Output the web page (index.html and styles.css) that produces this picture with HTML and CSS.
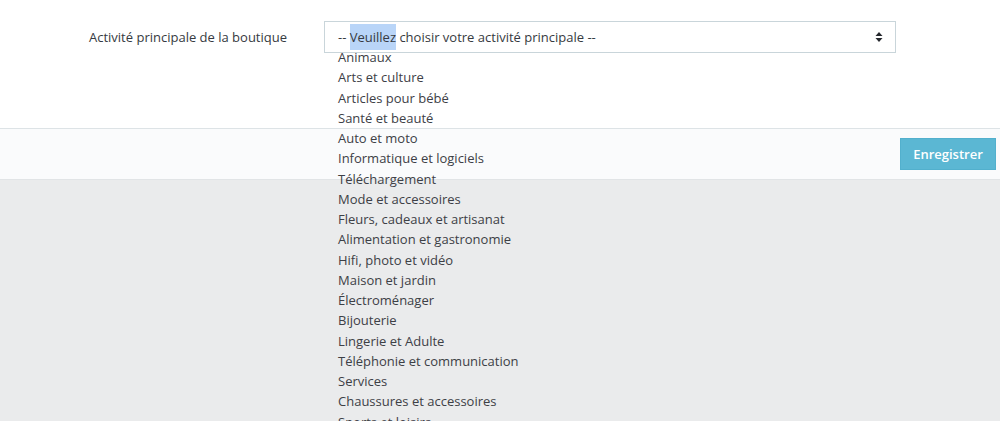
FILE: index.html
```html
<!DOCTYPE html>
<html lang="fr">
<head>
<meta charset="utf-8">
<title>Boutique</title>
<link rel="stylesheet" href="styles.css">
</head>
<body>
<div class="panel">
  <div class="form-row">
    <label class="form-label">Activité principale de la boutique</label>
    <div class="select-wrap">
      <div class="select"><span class="select-text">-- <span class="hl">Veuillez</span> choisir votre activité principale --</span>
        <svg class="arrows" width="8" height="12" viewBox="0 0 8 12"><path d="M4 1 L7.5 5 L0.5 5 Z M4 11 L7.5 7 L0.5 7 Z" fill="#25282d"/></svg>
      </div>
      <ul class="options">
        <li>Animaux</li>
        <li>Arts et culture</li>
        <li>Articles pour bébé</li>
        <li>Santé et beauté</li>
        <li>Auto et moto</li>
        <li>Informatique et logiciels</li>
        <li>Téléchargement</li>
        <li>Mode et accessoires</li>
        <li>Fleurs, cadeaux et artisanat</li>
        <li>Alimentation et gastronomie</li>
        <li>Hifi, photo et vidéo</li>
        <li>Maison et jardin</li>
        <li>Électroménager</li>
        <li>Bijouterie</li>
        <li>Lingerie et Adulte</li>
        <li>Téléphonie et communication</li>
        <li>Services</li>
        <li>Chaussures et accessoires</li>
        <li>Sports et loisirs</li>
      </ul>
    </div>
  </div>
</div>
<div class="footer">
  <button class="btn-save">Enregistrer</button>
</div>
<div class="page-bg"></div>
</body>
</html>
```
FILE: styles.css
```css
html, body {
  margin: 0;
  padding: 0;
  height: 100%;
  overflow: hidden;
  font-family: "Open Sans", "Noto Sans", sans-serif;
  font-size: 13px;
  color: #363a41;
  background: #eaebec;
}
.panel {
  background: #ffffff;
  height: 129px;
  box-sizing: border-box;
  padding-top: 21px;
  border-bottom: 1px solid #dde3e6;
}
.form-row {
  display: grid;
  grid-template-columns: 287px 572px;
  column-gap: 37px;
  align-items: center;
}
.form-label {
  text-align: right;
  color: #363a41;
  line-height: 32px;
}
.select-wrap {
  position: relative;
}
.select {
  height: 32px;
  box-sizing: border-box;
  border: 1px solid #c9d5da;
  background: #fff;
  display: flex;
  align-items: center;
  justify-content: space-between;
  padding: 0 12px 0 13px;
  color: #363a41;
}
.hl {
  background: #b9d5f8;
  padding: 4px 0;
}
.arrows {
  display: block;
}
.options {
  position: absolute;
  left: 0;
  top: 26px;
  margin: 0;
  padding: 0 0 0 14px;
  list-style: none;
  line-height: 20.25px;
  color: #3d4046;
  z-index: 5;
}
.footer {
  background: #fafbfc;
  height: 51px;
  box-sizing: border-box;
  padding: 9px 4px 0 0;
  border-bottom: 1px solid #e1e4e6;
  display: flex;
  justify-content: flex-end;
  align-items: flex-start;
}
.btn-save {
  width: 96px;
  height: 32px;
  background: #5bb7d3;
  border: 1px solid #52b0cd;
  color: #fff;
  font-family: "Open Sans", "Noto Sans", sans-serif;
  font-weight: 600;
  font-size: 13px;
  padding: 0;
}
.page-bg {
  background: #eaebec;
}
```
